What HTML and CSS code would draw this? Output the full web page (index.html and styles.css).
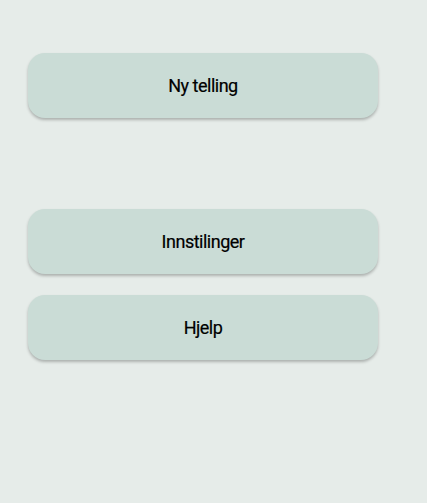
FILE: index.html
```html
<!DOCTYPE html>
<html lang="no">
<head>
<meta charset="utf-8">
<link rel="stylesheet" href="styles.css">
</head>
<body>
<main class="menu">
  <button class="btn">Ny telling</button>
  <div class="spacer"></div>
  <button class="btn">Innstilinger</button>
  <button class="btn">Hjelp</button>
</main>
</body>
</html>
```
FILE: styles.css
```css
html, body {
  margin: 0;
  padding: 0;
  background: #e6ece9;
  height: 100%;
}
.menu {
  display: flex;
  flex-direction: column;
  gap: 21px;
  padding: 53px 0 0 28px;
  width: 350px;
}
.spacer {
  height: 49px;
}
.btn {
  height: 65px;
  border: none;
  border-radius: 17px;
  background: #cadcd6;
  box-shadow: 0 2px 3px rgba(0, 0, 0, 0.25);
  font-family: Roboto, "Noto Sans", sans-serif;
  font-size: 18px;
  font-weight: 400;
  letter-spacing: -0.5px;
  color: #000;
  padding: 0;
  -webkit-text-stroke: 0.2px #000;
}
```
